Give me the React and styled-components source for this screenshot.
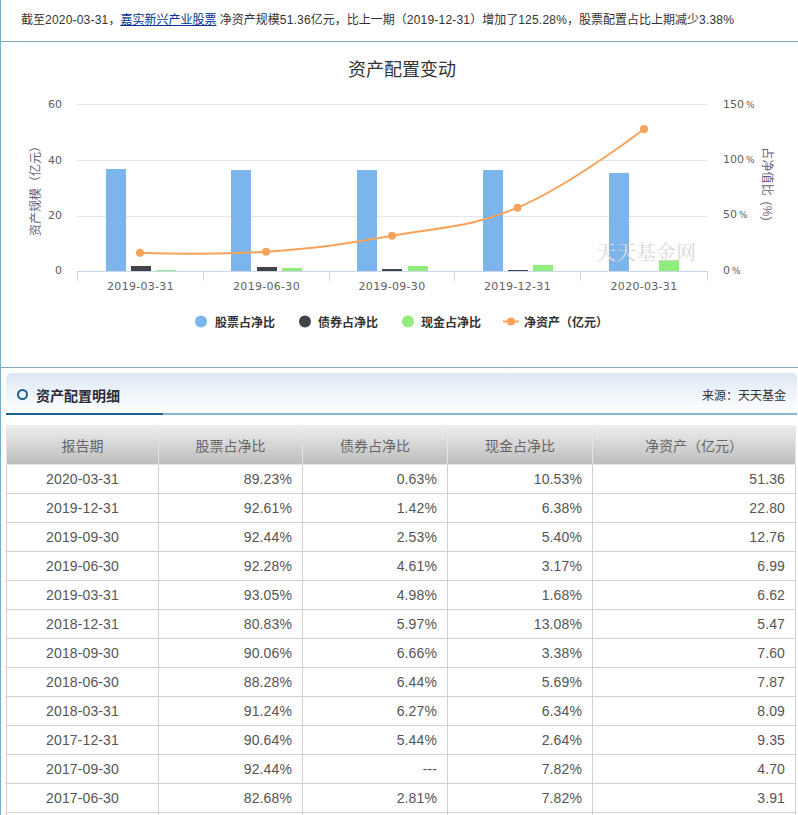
import styled, { createGlobalStyle } from "styled-components";

const SANS = `"Liberation Sans", "Noto Sans CJK SC", sans-serif`;

const rows = [
  ["2020-03-31", "89.23%", "0.63%", "10.53%", "51.36"],
  ["2019-12-31", "92.61%", "1.42%", "6.38%", "22.80"],
  ["2019-09-30", "92.44%", "2.53%", "5.40%", "12.76"],
  ["2019-06-30", "92.28%", "4.61%", "3.17%", "6.99"],
  ["2019-03-31", "93.05%", "4.98%", "1.68%", "6.62"],
  ["2018-12-31", "80.83%", "5.97%", "13.08%", "5.47"],
  ["2018-09-30", "90.06%", "6.66%", "3.38%", "7.60"],
  ["2018-06-30", "88.28%", "6.44%", "5.69%", "7.87"],
  ["2018-03-31", "91.24%", "6.27%", "6.34%", "8.09"],
  ["2017-12-31", "90.64%", "5.44%", "2.64%", "9.35"],
  ["2017-09-30", "92.44%", "---", "7.82%", "4.70"],
  ["2017-06-30", "82.68%", "2.81%", "7.82%", "3.91"],
  ["", "", "", "", ""],
];

const headers = ["报告期", "股票占净比", "债券占净比", "现金占净比", "净资产（亿元）"];

const bars = [
  { x: 106, w: 20, tops: 169, color: "#7cb5ec" },
  { x: 231, w: 20, tops: 170, color: "#7cb5ec" },
  { x: 357, w: 20, tops: 170, color: "#7cb5ec" },
  { x: 483, w: 20, tops: 170, color: "#7cb5ec" },
  { x: 609, w: 20, tops: 173, color: "#7cb5ec" },
  { x: 131, w: 20, tops: 266, color: "#434348" },
  { x: 257, w: 20, tops: 267, color: "#434348" },
  { x: 382, w: 20, tops: 269, color: "#434348" },
  { x: 508, w: 20, tops: 270, color: "#434348" },
  { x: 156, w: 20, tops: 270, color: "#90ed7d" },
  { x: 282, w: 20, tops: 268, color: "#90ed7d" },
  { x: 408, w: 20, tops: 266, color: "#90ed7d" },
  { x: 533, w: 20, tops: 265, color: "#90ed7d" },
  { x: 659, w: 20, tops: 260, color: "#90ed7d" },
];

const points = [
  [140, 252.7],
  [266, 251.7],
  [392, 235.7],
  [517.5, 207.7],
  [644, 129],
];

// same control point maths as a highcharts spline
const splinePath = (pts) => {
  const smooth = 1.5;
  const conts = pts.map(([x, y], i) => {
    const prev = pts[i - 1];
    const next = pts[i + 1];
    if (!prev || !next) return null;
    let lx = (smooth * x + prev[0]) / (smooth + 1);
    let ly = (smooth * y + prev[1]) / (smooth + 1);
    let rx = (smooth * x + next[0]) / (smooth + 1);
    let ry = (smooth * y + next[1]) / (smooth + 1);
    const dl = Math.hypot(lx - x, ly - y);
    const dr = Math.hypot(rx - x, ry - y);
    const correction = ((ly - ry) * dr) / (dl + dr) + ry - y;
    const cx = ((lx - rx) * dr) / (dl + dr) + rx - x;
    lx -= cx;
    rx -= cx;
    ly -= correction;
    ry -= correction;
    return { lx, ly, rx, ry };
  });
  let d = `M ${pts[0][0]} ${pts[0][1]}`;
  for (let i = 1; i < pts.length; i++) {
    const a = conts[i - 1] ? [conts[i - 1].rx, conts[i - 1].ry] : pts[i - 1];
    const b = conts[i] ? [conts[i].lx, conts[i].ly] : pts[i];
    d += ` C ${a[0]} ${a[1]} ${b[0]} ${b[1]} ${pts[i][0]} ${pts[i][1]}`;
  }
  return d;
};

const AssetChart = () => (
  <ChartSvg width="797" height="325" viewBox="1 42 797 325">
    <ChartTitle x="402" y="76" textAnchor="middle">资产配置变动</ChartTitle>

    {[104.5, 160.5, 216.5].map((y) => (
      <line key={y} x1="77" x2="707" y1={y} y2={y} stroke="#e6e6e6" />
    ))}
    <line x1="77" x2="708" y1="271.5" y2="271.5" stroke="#ccd6eb" />
    {[77.5, 203.5, 329.5, 454.5, 580.5, 707.5].map((x) => (
      <line key={x} x1={x} x2={x} y1="271" y2="281" stroke="#ccd6eb" />
    ))}

    {bars.map((b) => (
      <rect key={b.x} x={b.x} y={b.tops} width={b.w} height={271 - b.tops} fill={b.color} />
    ))}

    <path d={splinePath(points)} fill="none" stroke="#f7a35c" strokeWidth="2" />
    {points.map(([x, y]) => (
      <circle key={x} cx={x} cy={y} r="4" fill="#f7a35c" />
    ))}

    <AxisLabel x="62" y="108" textAnchor="end">60</AxisLabel>
    <AxisLabel x="62" y="164" textAnchor="end">40</AxisLabel>
    <AxisLabel x="62" y="219" textAnchor="end">20</AxisLabel>
    <AxisLabel x="62" y="274" textAnchor="end">0</AxisLabel>

    {[
      [108, "150"],
      [163, "100"],
      [218, "50"],
      [274, "0"],
    ].map(([y, label]) => (
      <PercentLabel key={label} x="723" y={y}>
        {label} <PercentSign>%</PercentSign>
      </PercentLabel>
    ))}

    {[
      [140.5, "2019-03-31"],
      [266.5, "2019-06-30"],
      [392, "2019-09-30"],
      [517.5, "2019-12-31"],
      [644, "2020-03-31"],
    ].map(([x, label]) => (
      <AxisLabel key={label} x={x} y="290" textAnchor="middle" $spaced>{label}</AxisLabel>
    ))}

    <AxisTitle transform="translate(40 188) rotate(-90)" textAnchor="middle">资产规模（亿元）</AxisTitle>
    <RightTitle transform="translate(763 184) rotate(90)" textAnchor="middle">占净值比 (%)</RightTitle>

    <Watermark x="646" y="260" textAnchor="middle">天天基金网</Watermark>

    <circle cx="201" cy="321.5" r="6" fill="#7cb5ec" />
    <LegendText x="215" y="327">股票占净比</LegendText>
    <circle cx="305" cy="321.5" r="6" fill="#434348" />
    <LegendText x="318" y="327">债券占净比</LegendText>
    <circle cx="408" cy="321.5" r="6" fill="#90ed7d" />
    <LegendText x="421" y="327">现金占净比</LegendText>
    <line x1="503" x2="519" y1="321.5" y2="321.5" stroke="#f7a35c" strokeWidth="2" />
    <circle cx="511" cy="321.5" r="4" fill="#f7a35c" />
    <LegendText x="524" y="327">净资产（亿元）</LegendText>
  </ChartSvg>
);

export default function App() {
  return (
    <Page>
      <GlobalStyle />
      <Summary>
        截至<Num>2020-03-31</Num>，<FundLink href="#">嘉实新兴产业股票</FundLink> 净资产规模<Num>51.36</Num>亿元，比上一期（<Num>2019-12-31</Num>）增加了<Num>125.28%</Num>，股票配置占比上期减少<Num>3.38%</Num>
      </Summary>
      <ChartSection>
        <AssetChart />
      </ChartSection>
      <Detail>
        <DetailHead>
          <HeadTitle>
            <Ring />
            <h3>资产配置明细</h3>
          </HeadTitle>
          <Source>来源：天天基金</Source>
        </DetailHead>
        <Table>
          <colgroup>
            <col width="152" />
            <col width="144" />
            <col width="145" />
            <col width="145" />
            <col width="203" />
          </colgroup>
          <thead>
            <tr>
              {headers.map((h) => (
                <HeadCell key={h}>{h}</HeadCell>
              ))}
            </tr>
          </thead>
          <tbody>
            {rows.map((row, i) => (
              <tr key={i}>
                {row.map((val, j) => (
                  <Cell key={j} $date={j === 0}>{val}</Cell>
                ))}
              </tr>
            ))}
          </tbody>
        </Table>
      </Detail>
    </Page>
  );
}

const GlobalStyle = createGlobalStyle`
  html, body {
    margin: 0;
    padding: 0;
    height: 815px;
    overflow: hidden;
    background: #fff;
  }
`;

const Page = styled.div`
  width: 798px;
  height: 815px;
  overflow: hidden;
  box-sizing: border-box;
  border-left: 1px solid #7ab0cf;
  font-family: ${SANS};
  background: #fff;
`;

const Summary = styled.div`
  height: 41px;
  line-height: 41px;
  padding-left: 20px;
  font-size: 12px;
  color: #333;
  white-space: nowrap;
  border-bottom: 1px solid #7fa9bd;
`;

const Num = styled.span`
  letter-spacing: 0.2px;
`;

const FundLink = styled.a`
  color: #003399;
  text-decoration: underline;
`;

const ChartSection = styled.div`
  height: 325px;
  border-bottom: 1px solid #7fa9bd;
`;

const ChartSvg = styled.svg`
  display: block;
  font-family: ${SANS};
`;

const ChartTitle = styled.text`
  font-size: 18px;
  fill: #333;
`;

const AxisLabel = styled.text`
  font-family: "DejaVu Sans", sans-serif;
  font-size: 11px;
  fill: #606060;
  letter-spacing: ${(p) => (p.$spaced ? "0.3px" : "0")};
`;

const PercentLabel = styled(AxisLabel)`
  word-spacing: -1.5px;
`;

const PercentSign = styled.tspan`
  font-size: 9px;
`;

const AxisTitle = styled.text`
  font-size: 12px;
  fill: #6d6080;
`;

const RightTitle = styled(AxisTitle)`
  word-spacing: 2px;
  letter-spacing: 0.2px;
`;

const Watermark = styled.text`
  font-family: "Liberation Serif", "Noto Serif CJK SC", "Noto Sans CJK SC", serif;
  font-size: 20px;
  fill: #d9d9d9;
`;

const LegendText = styled.text`
  font-size: 12px;
  font-weight: 700;
  fill: #333;
`;

const Detail = styled.section`
  margin: 5px 1px 0 5px;
`;

const DetailHead = styled.div`
  height: 42px;
  display: flex;
  align-items: center;
  justify-content: space-between;
  padding: 3px 11px 0 11px;
  box-sizing: border-box;
  border-radius: 5px 5px 0 0;
  background: linear-gradient(#dde8f3, #fff);
  border-bottom: 2px solid #8ab8d4;
  position: relative;

  &::after {
    content: "";
    position: absolute;
    left: 0;
    bottom: -2px;
    width: 157px;
    height: 2px;
    background: #1a6390;
  }
`;

const HeadTitle = styled.div`
  display: flex;
  align-items: center;
  gap: 8px;

  h3 {
    margin: 0;
    font-size: 14px;
    font-weight: 700;
    color: #2b2b3a;
  }
`;

const Ring = styled.span`
  width: 11px;
  height: 11px;
  box-sizing: border-box;
  border: 2px solid #1a6390;
  border-radius: 50%;
`;

const Source = styled.span`
  font-size: 12px;
  color: #333;
`;

const Table = styled.table`
  width: 790px;
  margin-top: 10px;
  border-collapse: collapse;
  table-layout: fixed;
`;

const HeadCell = styled.th`
  height: 39px;
  padding: 0;
  font-size: 14px;
  font-weight: 400;
  color: #666;
  background: linear-gradient(#eeeeee, #bdbdbd);
  border: 1px solid #e4e4e4;
  border-top: 0;
`;

const Cell = styled.td`
  height: 28px;
  padding: 0 10px;
  font-size: 14px;
  letter-spacing: 0.12px;
  color: #555;
  text-align: ${(p) => (p.$date ? "center" : "right")};
  border: 1px solid #d0d0d0;
`;
